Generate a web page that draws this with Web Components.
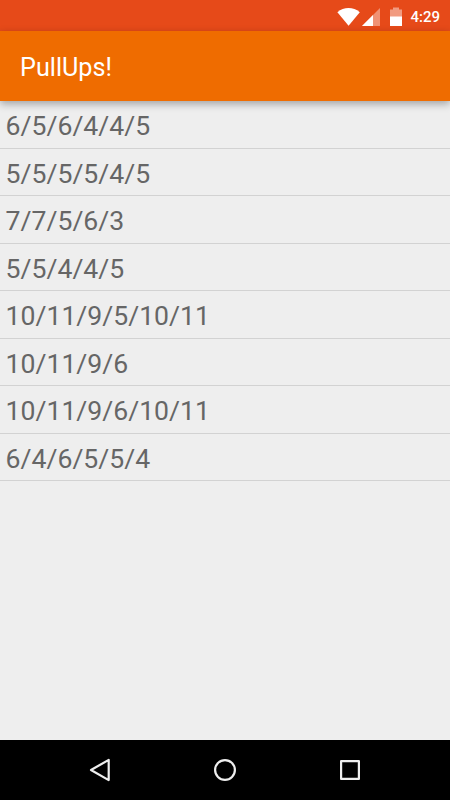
<!DOCTYPE html>
<html lang="en">
<head>
<meta charset="utf-8">
<title>PullUps!</title>
<style>
  html, body {
    margin: 0;
    height: 100%;
    background: #eeeeee;
    font-family: Roboto, sans-serif;
  }
</style>
</head>
<body>
<pullups-app></pullups-app>

<script>
class StatusBar extends HTMLElement {
  constructor() {
    super()
    this.attachShadow({ mode: 'open' })
  }

  connectedCallback() {
    this.shadowRoot.innerHTML = `
      <style>
        :host {
          display: flex;
          align-items: center;
          justify-content: flex-end;
          box-sizing: border-box;
          height: 31px;
          padding: 2px 10px 0 0;
          background: #e64a19;
          color: #fff;
          font-size: 15px;
          font-weight: 500;
        }

        svg {
          display: block;
          margin-right: 7px;
          fill: #fff;
        }
      </style>
      <svg width="66" height="20" viewBox="337 6 66 20">
        <path d="M337.4 11.3C343.8 5.7 353.2 5.7 359.8 11.3L348.6 24.7Z"/>
        <path d="M380 7v18h-18z" opacity=".4"/>
        <path d="M373 14v11h-11z"/>
        <path d="M393 6.5h6v2h3V16h-12V8.500h3z" opacity=".45"/>
        <path d="M390 15.500h12V25h-12z"/>
      </svg>
      <span><slot></slot></span>
    `
  }
}

class AppToolbar extends HTMLElement {
  constructor() {
    super()
    this.attachShadow({ mode: 'open' })
  }

  connectedCallback() {
    this.shadowRoot.innerHTML = `
      <style>
        :host {
          display: flex;
          align-items: center;
          box-sizing: border-box;
          height: 70px;
          padding: 3px 20px 0;
          background: #ef6c00;
          color: #fff;
          font-size: 25.2px;
          box-shadow: 0 3px 8px rgba(0, 0, 0, 0.32);
          position: relative;
          z-index: 1;
        }
      </style>
      <slot></slot>
    `
  }
}

class WorkoutRow extends HTMLElement {
  constructor() {
    super()
    this.attachShadow({ mode: 'open' })
  }

  connectedCallback() {
    this.shadowRoot.innerHTML = `
      <style>
        :host {
          display: flex;
          align-items: center;
          box-sizing: border-box;
          height: 47.5px;
          padding: 3px 5.6px 0;
          border-bottom: 1px solid #d2d2d2;
          color: #666;
          font-size: 26.6px;
        }

        /* half-pixel rows: keep the baselines evenly rounded */
        :host(:nth-child(even)) {
          padding-top: 3.9px;
        }
      </style>
      <slot></slot>
    `
  }
}

class NavigationBar extends HTMLElement {
  constructor() {
    super()
    this.attachShadow({ mode: 'open' })
  }

  connectedCallback() {
    this.shadowRoot.innerHTML = `
      <style>
        :host {
          display: flex;
          align-items: center;
          justify-content: center;
          gap: 101px;
          height: 60px;
          background: #000;
        }

        svg {
          display: block;
          fill: none;
          stroke: #eee;
          stroke-width: 2.2;
          stroke-linejoin: round;
        }
      </style>
      <svg width="24" height="24"><path d="M3 12 20.700 1.900v20.200z"/></svg>
      <svg width="24" height="24"><circle cx="12" cy="12" r="9.900"/></svg>
      <svg width="24" height="24"><path d="M3.100 3.100h17.800v17.800H3.100z"/></svg>
    `
  }
}

class PullupsApp extends HTMLElement {
  constructor() {
    super()
    this.attachShadow({ mode: 'open' })
    this.workouts = [
      '6/5/6/4/4/5',
      '5/5/5/5/4/5',
      '7/7/5/6/3',
      '5/5/4/4/5',
      '10/11/9/5/10/11',
      '10/11/9/6',
      '10/11/9/6/10/11',
      '6/4/6/5/5/4'
    ]
  }

  connectedCallback() {
    this.shadowRoot.innerHTML = `
      <style>
        :host {
          display: flex;
          flex-direction: column;
          height: 100vh;
        }

        main {
          flex: 1;
          overflow: hidden;
        }
      </style>
      <status-bar>4:29</status-bar>
      <app-toolbar>PullUps!</app-toolbar>
      <main>
        ${this.workouts.map(sets => `<workout-row>${sets}</workout-row>`).join('')}
      </main>
      <navigation-bar></navigation-bar>
    `
  }
}

customElements.define('status-bar', StatusBar)
customElements.define('app-toolbar', AppToolbar)
customElements.define('workout-row', WorkoutRow)
customElements.define('navigation-bar', NavigationBar)
customElements.define('pullups-app', PullupsApp)
</script>
</body>
</html>
